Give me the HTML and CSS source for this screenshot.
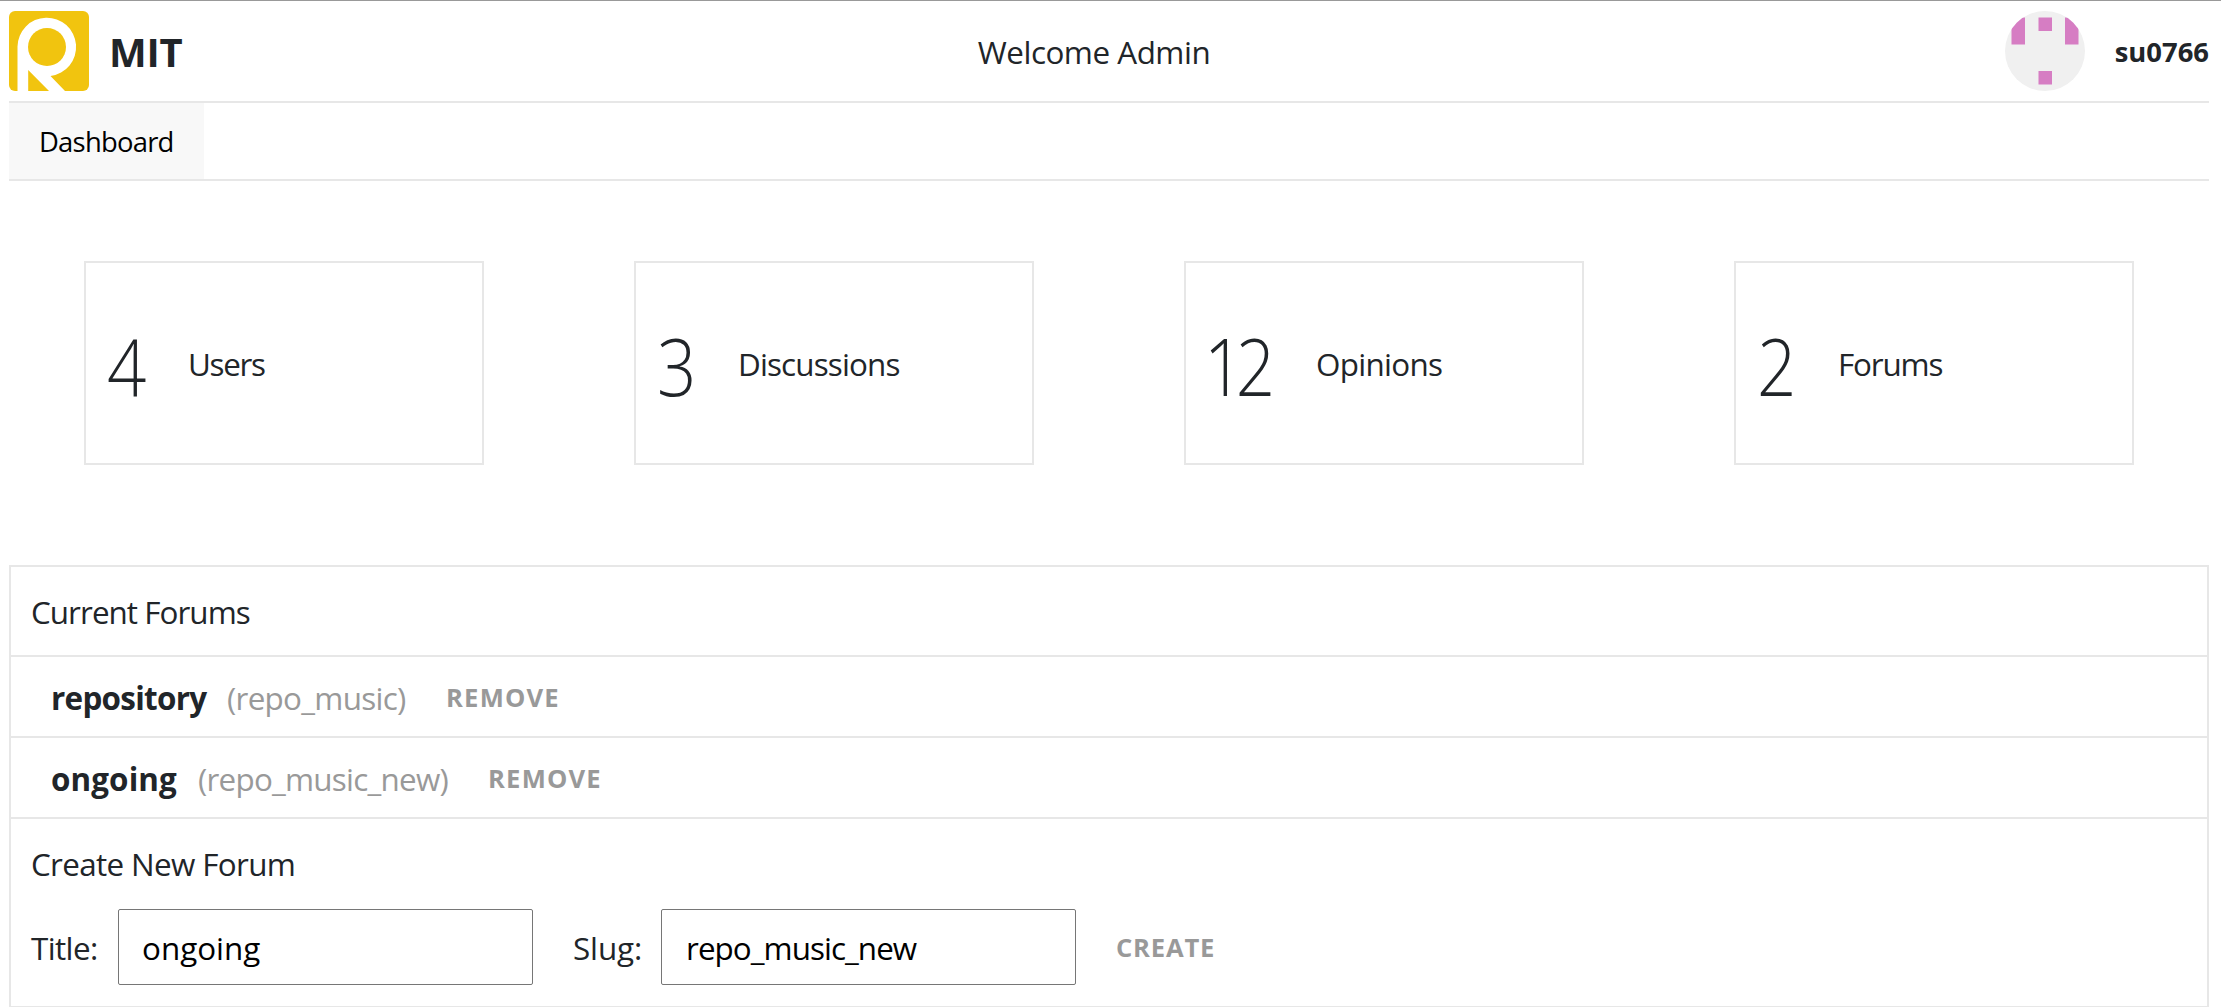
FILE: index.html
```html
<!DOCTYPE html>
<html lang="en">
<head>
<meta charset="utf-8">
<title>Dashboard</title>
<link rel="stylesheet" href="styles.css">
</head>
<body>
<header class="header">
  <div class="brand">
    <svg class="logo" viewBox="0 0 80 80" width="80" height="80">
      <defs><clipPath id="tile"><rect width="80" height="80" rx="6"/></clipPath></defs>
      <g clip-path="url(#tile)">
        <rect width="80" height="80" fill="#f1c40f"/>
        <path d="M8.500 80V35.500A29.300 29.300 0 1 1 41.500 65L56 80H40L19.200 59V80Z" fill="#fff"/>
        <circle cx="38" cy="36" r="19" fill="#f1c40f"/>
      </g>
    </svg>
    <span class="brand-name">MIT</span>
  </div>
  <div class="welcome">Welcome Admin</div>
  <div class="account">
    <svg class="avatar" viewBox="0 0 80 80" width="80" height="80">
      <defs><clipPath id="round"><circle cx="40" cy="40" r="40"/></clipPath></defs>
      <g clip-path="url(#round)">
        <rect width="80" height="80" fill="#f0f0f0"/>
        <path d="M6.500 6.500h13.500v27h-13.500zM33.500 6.500h13.500v13.500h-13.500zM60 6.500h13.500v27h-13.500zM33.500 60h13.500v13.500h-13.500z" fill="#d67dc3"/>
      </g>
    </svg>
    <span class="user-name">su0766</span>
  </div>
</header>
<nav class="nav"><a class="tab">Dashboard</a></nav>
<section class="stats">
  <div class="card"><span class="count">4</span><span class="kind users">Users</span></div>
  <div class="card"><span class="count">3</span><span class="kind discussions">Discussions</span></div>
  <div class="card"><span class="count wide">12</span><span class="kind opinions">Opinions</span></div>
  <div class="card"><span class="count">2</span><span class="kind forums">Forums</span></div>
</section>
<section class="panel">
  <div class="panel-title">Current Forums</div>
  <div class="forum"><b class="title repository">repository</b><span class="slug short">(repo_music)</span><button class="action">REMOVE</button></div>
  <div class="forum"><b class="title ongoing">ongoing</b><span class="slug long">(repo_music_new)</span><button class="action">REMOVE</button></div>
  <div class="create">
    <div class="create-title">Create New Forum</div>
    <form class="form">
      <label class="label for-title" for="title">Title:</label><input class="input" id="title" value="ongoing">
      <label class="label for-slug" for="slug">Slug:</label><input class="input slug-input" id="slug" value="repo_music_new">
      <button class="action submit" type="button">CREATE</button>
    </form>
  </div>
</section>
</body>
</html>
```
FILE: styles.css
```css
* { box-sizing: border-box; }

html { overflow: hidden; }

body {
  margin: 0;
  padding: 0 12px 0 9px;
  height: 1007px;
  overflow: hidden;
  border-top: 1px solid #999;
  background: #fff;
  color: #212529;
  font: 31.4px/48px "Open Sans", "Noto Sans", sans-serif;
  white-space: nowrap;
}

.header {
  display: grid;
  grid-template-columns: 1fr auto 1fr;
  align-items: center;
  height: 102px;
  border-bottom: 2px solid #e7e7e7;
}

.brand, .account { display: flex; align-items: center; }
.logo, .avatar { display: block; }
.brand-name { margin-left: 20px; padding-top: 2px; font-size: 40px; font-weight: 700; letter-spacing: -.2px; }
.welcome { padding-top: 2px; letter-spacing: -.48px; transform: translateX(-15px); }
.account { justify-content: flex-end; }
.user-name { margin-left: 30px; padding-top: 1px; font-size: 27.4px; font-weight: 700; }

.nav { display: flex; height: 78px; border-bottom: 2px solid #e7e7e7; }
.tab {
  width: 195px;
  padding-left: 30px;
  background: #f8f8f8;
  color: #000;
  font-size: 27.4px;
  line-height: 77px;
  letter-spacing: -.75px;
}

.stats { display: flex; justify-content: space-around; padding: 80px 0 100px; }
.card {
  display: flex;
  align-items: center;
  width: 400px;
  height: 204px;
  padding-left: 20px;
  border: 2px solid #e7e7e7;
}
.count {
  width: 82px;
  padding: 6px 0 0 1px;
  font-size: 78.4px;
  font-weight: 300;
  line-height: 100px;
  transform: scaleX(.88);
  transform-origin: left;
}
.count.wide { width: 113px; margin-left: -3px; letter-spacing: -8.5px; }
.kind { padding-top: 2px; }
.users { letter-spacing: -1.32px; }
.discussions { letter-spacing: -.85px; }
.opinions { letter-spacing: -.69px; }
.forums { letter-spacing: -1.15px; }

.panel { height: 443px; border: 2px solid #e7e7e7; }
.panel-title { height: 90px; padding: 1px 0 0 20px; border-bottom: 2px solid #e7e7e7; line-height: 88px; letter-spacing: -.95px; }
.forum { display: flex; align-items: center; height: 81px; padding: 2px 0 0 40px; border-bottom: 2px solid #e7e7e7; }
.repository { width: 176px; letter-spacing: -.7px; }
.ongoing { width: 147px; letter-spacing: .1px; }
.slug { color: #999; }
.short { width: 219px; letter-spacing: -.7px; }
.long { width: 290px; letter-spacing: -.75px; }
.action {
  padding: 0;
  border: 0;
  background: none;
  color: #999;
  font: 700 25.600px/48px "Open Sans", "Noto Sans", sans-serif;
  letter-spacing: 1.2px;
}

.create { padding: 20px 20px 0; }
.create-title { padding-top: 1px; letter-spacing: -.65px; }
.form { display: flex; align-items: center; margin: 21px 0 0; }
.label { padding-top: 2px; letter-spacing: 0; }
.for-title { width: 87px; letter-spacing: -.6px; }
.for-slug { width: 88px; margin-left: 40px; letter-spacing: -.1px; }
.input {
  width: 415px;
  height: 76px;
  padding: 1px 23px 0;
  border: 1px solid #767676;
  border-radius: 2px;
  background: #fff;
  color: #000;
  font: inherit;
}
.slug-input { padding-left: 24px; letter-spacing: -.95px; }
.submit { margin-left: 40px; padding-top: 2px; letter-spacing: .8px; }
```
